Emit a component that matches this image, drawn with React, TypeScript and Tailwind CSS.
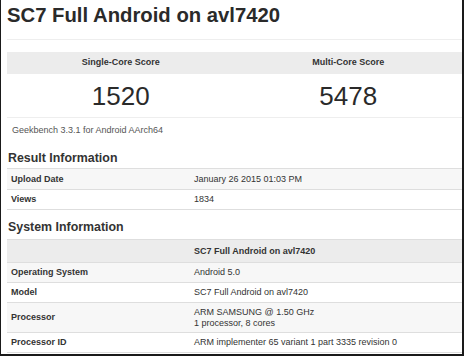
import React from "react";

const Row = ({
  label,
  children,
  bg,
  h,
  last,
  boldValue,
}: {
  label: string;
  children: React.ReactNode;
  bg: string;
  h: string;
  last?: boolean;
  boldValue?: boolean;
}) => (
  <div
    className={`grid grid-cols-[183px_1fr] items-center border-t border-[#dedede] ${bg} ${h} ${last ? "border-b" : ""}`}
  >
    <div className="pl-[4px] font-bold">{label}</div>
    <div className={`pl-[4px] ${boldValue ? "font-bold" : ""}`}>{children}</div>
  </div>
);

export default function App() {
  return (
    <div className="w-[464px] h-[356px] bg-white border-l border-r-2 border-b-2 border-[#1a1a1a] overflow-hidden font-['Liberation_Sans',Arial,sans-serif] text-[#333]">
      <div className="pl-[6px]">
        <h1 className="h-[39px] pt-[3px] text-[20.3px] leading-[24px] font-bold text-[#2a2a2a] whitespace-nowrap">
          SC7 Full Android on avl7420
        </h1>
        <div className="border-t border-[#eeeeee] pt-[12px]">
          <div className="grid grid-cols-2 bg-[#ececec] h-[22px] items-center text-center text-[9px] font-bold">
            <div>Single-Core Score</div>
            <div>Multi-Core Score</div>
          </div>
          <div className="grid grid-cols-2 h-[43px] items-center text-center text-[26px] leading-[30px] text-[#2a2a2a]">
            <div>1520</div>
            <div>5478</div>
          </div>
        </div>
        <div className="border-t border-[#eeeeee] h-[25px] flex items-center pt-[2px] pl-[5px] text-[9px] text-[#555]">
          Geekbench 3.3.1 for Android AArch64
        </div>
        <div className="h-[26px] pt-[8px] text-[12.4px] leading-[16px] font-bold pl-[1px]">
          Result Information
        </div>
        <div className="text-[9px] leading-[11px]">
          <Row label="Upload Date" bg="bg-[#f7f7f7]" h="h-[21px]">
            January 26 2015 01:03 PM
          </Row>
          <Row label="Views" bg="bg-white" h="h-[21px]" last>
            1834
          </Row>
        </div>
        <div className="h-[29px] pt-[9px] text-[12.4px] leading-[16px] font-bold pl-[1px]">
          System Information
        </div>
        <div className="text-[9px] leading-[11px]">
          <Row label="" bg="bg-[#ececec]" h="h-[23px]" boldValue>
            SC7 Full Android on avl7420
          </Row>
          <Row label="Operating System" bg="bg-[#f7f7f7]" h="h-[20px]">
            Android 5.0
          </Row>
          <Row label="Model" bg="bg-white" h="h-[20px]">
            SC7 Full Android on avl7420
          </Row>
          <Row label="Processor" bg="bg-[#f7f7f7]" h="h-[30px]">
            <div>ARM SAMSUNG @ 1.50 GHz</div>
            <div>1 processor, 8 cores</div>
          </Row>
          <Row label="Processor ID" bg="bg-white" h="h-[21px]" last>
            ARM implementer 65 variant 1 part 3335 revision 0
          </Row>
        </div>
      </div>
    </div>
  );
}
